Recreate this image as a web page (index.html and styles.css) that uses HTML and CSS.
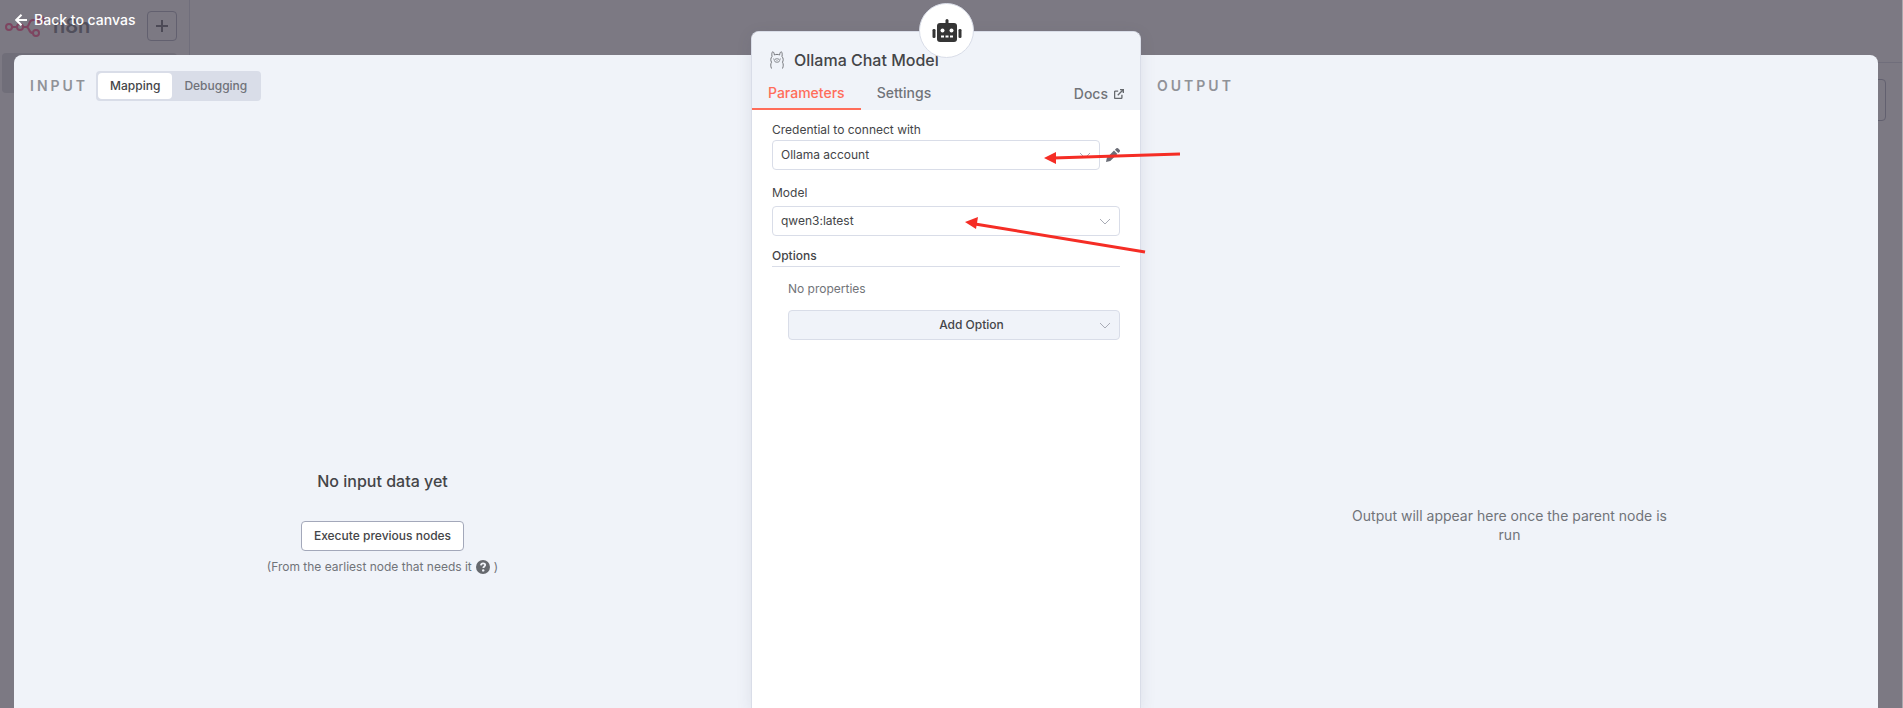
FILE: index.html
```html
<!DOCTYPE html>
<html lang="en">
  <head>
    <meta charset="UTF-8" />
    <meta name="viewport" content="width=device-width, initial-scale=1.0" />
    <title>Ollama Chat Model - n8n</title>
    <link rel="stylesheet" href="styles.css">
  </head>
  <body>
    <!-- dimmed editor behind the dialog -->
    <div class="app">
      <div class="sidebar">
        <div class="sidebar-header">
          <svg class="logo" width="40" height="24" viewBox="0 0 40 24" fill="none" stroke="#7d4560" stroke-width="2">
            <circle cx="4" cy="13" r="3" />
            <circle cx="15" cy="13" r="3" />
            <circle cx="36" cy="6" r="3" />
            <circle cx="31" cy="19" r="3" />
            <path d="M7 13h5M18 13h3c4 0 2-7 7-7h5M21 13c4 0 2 6 7 6" />
          </svg>
          <span class="brand">n8n</span>
          <button class="add-button" aria-label="Add">
            <svg width="12" height="12" viewBox="0 0 12 12" stroke="#4c4a56" stroke-width="2"><path d="M6 0v12M0 6h12" /></svg>
          </button>
        </div>
        <div class="menu-item"></div>
      </div>
      <div class="workspace">
        <div class="workspace-header"></div>
        <button class="canvas-button" aria-label="Open nodes"></button>
      </div>
    </div>

    <a class="back" href="#">
      <svg width="12" height="12" viewBox="0 0 12 12" fill="none" stroke="#fff" stroke-width="2"><path d="M12 6H1.500M6.500.7L1.200 6l5.300 5.300" /></svg>
      Back to canvas
    </a>

    <main class="modal">
      <section class="pane">
        <div class="pane-header">
          <h2 class="pane-title">Input</h2>
          <div class="switch">
            <button class="switch-item active">Mapping</button>
            <button class="switch-item">Debugging</button>
          </div>
        </div>
        <div class="no-input">
          <h3 class="empty-title">No input data yet</h3>
          <button class="execute">Execute previous nodes</button>
          <p class="hint">
            (From the earliest node that needs it
            <svg width="14" height="14" viewBox="0 0 14 14"><circle cx="7" cy="7" r="7" fill="#66696e" /><path d="M4.900 5.300c.2-1.300 1-1.900 2.200-1.900 1.200 0 2.100.7 2.100 1.700 0 1.400-1.900 1.400-1.900 2.900" fill="none" stroke="#f0f3f9" stroke-width="1.800" /><circle cx="7.200" cy="10.400" r="1.200" fill="#f0f3f9" /></svg>
            )
          </p>
        </div>
      </section>

      <section class="node">
        <div class="node-badge">
          <svg width="30" height="24" viewBox="0 0 30 24" fill="#353535">
            <rect x="13.500" y="0" width="3" height="6" rx="1.500" />
            <rect x="5" y="4" width="20" height="19" rx="3" />
            <rect x="0.500" y="10" width="3" height="9" rx="1.300" />
            <rect x="26.500" y="10" width="3" height="9" rx="1.300" />
            <g fill="#fff">
              <circle cx="10.500" cy="11.500" r="2" />
              <circle cx="19.500" cy="11.500" r="2" />
              <path d="M9 16.500h3v2H9zM13.500 16.500h3v2h-3zM18 16.500h3v2h-3z" />
            </g>
          </svg>
        </div>
        <div class="node-header">
          <h1 class="node-title">
            <svg width="16" height="18" viewBox="0 0 16 18" fill="none" stroke="#75777c" stroke-width="1">
              <path d="M3 5.500C2.600 3 2.800 1 3.700.8c1 0 1.500 1.500 1.700 3.200 1.600-.8 3.600-.8 5.200 0 .2-1.700.7-3.200 1.700-3.200.9.2 1.100 2.200.7 4.700 1.500 1.700 1.500 4 .5 5.700 1 1.900 1 3.900 0 6.300M3 5.500c-1.500 1.700-1.500 4-.5 5.700-1 1.900-1 3.900 0 6.300" />
              <ellipse cx="8" cy="9.500" rx="2.600" ry="1.800" stroke-width="0.800" />
              <path d="M8 9.300v.8M4.300 8h.8M10.900 8h.8" />
            </svg>
            Ollama Chat Model
          </h1>
          <nav class="tabs">
            <a class="tab active" href="#">Parameters</a>
            <a class="tab" href="#">Settings</a>
            <a class="tab docs" href="#">
              Docs
              <svg width="10" height="10" viewBox="0 0 12 12" fill="none" stroke="#66696e" stroke-width="1.600"><path d="M5 2.500H1.700a1 1 0 0 0-1 1v6.800a1 1 0 0 0 1 1h6.800a1 1 0 0 0 1-1V7M7.200.8h4v4M11 1L4.500 7.500" /></svg>
            </a>
          </nav>
        </div>

        <form class="parameters">
          <label class="label" for="credential">Credential to connect with</label>
          <div class="credential-row">
            <div class="select">
              <select id="credential"><option>Ollama account</option></select>
              <svg class="chevron" width="12" height="8" viewBox="0 0 12 8"><path d="M1 1l5 5 5-5" /></svg>
            </div>
            <button class="edit" type="button" aria-label="Edit credential">
              <svg width="14" height="14" viewBox="0 0 14 14" fill="#6b6d76"><path d="M0 14l.9-4.300L8 2.600 11.400 6l-7.100 7.100zM8.900 1.700L10.100.5c.7-.7 1.500-.7 2.200 0l1.200 1.200c.7.7.7 1.500 0 2.200L12.300 5.100z" /></svg>
            </button>
          </div>

          <label class="label model-label" for="model">Model</label>
          <div class="select">
            <select id="model"><option>qwen3:latest</option></select>
            <svg class="chevron" width="12" height="8" viewBox="0 0 12 8"><path d="M1 1l5 5 5-5" /></svg>
          </div>

          <h4 class="options-title">Options</h4>
          <div class="options">
            <p class="no-properties">No properties</p>
            <div class="select add-option">
              <select aria-label="Add Option"><option>Add Option</option></select>
              <svg class="chevron" width="12" height="8" viewBox="0 0 12 8"><path d="M1 1l5 5 5-5" /></svg>
            </div>
          </div>
        </form>

        <svg class="arrows" width="240" height="110" viewBox="0 0 240 110" stroke="#f52d25" stroke-width="3" fill="#f52d25">
          <path d="M215 9L88 13" />
          <path d="M79 13l12-6v12z" stroke="none" />
          <path d="M180 107L10 79" />
          <path d="M0 77l13-5-2 12z" stroke="none" />
        </svg>
      </section>

      <section class="pane">
        <div class="pane-header">
          <h2 class="pane-title">Output</h2>
        </div>
        <p class="no-output">Output will appear here once the parent node is run</p>
      </section>
    </main>
  </body>
</html>
```
FILE: styles.css
```css
* {
  box-sizing: border-box;
}

body {
  margin: 0;
  height: 100vh;
  overflow: hidden;
  position: relative;
  font-family: Inter, sans-serif;
  font-size: 12px;
  line-height: 16px;
  color: #444548;
  background: #7c7983;
}

h1, h2, h3, h4, p {
  margin: 0;
  font-weight: 400;
}

button, select {
  font: inherit;
  color: inherit;
}

a {
  color: inherit;
  text-decoration: none;
}

svg {
  display: block;
  flex: none;
}

/* dimmed editor */
.app {
  position: absolute;
  inset: 0;
  display: flex;
  border-right: 1px solid #aaa8ae;
}

.sidebar {
  width: 190px;
  border-right: 1px solid #706e7b;
}

.sidebar-header {
  display: flex;
  align-items: center;
  height: 52px;
  margin-bottom: 1px;
  padding: 0 12px 0 5px;
}

.brand {
  margin-left: 8px;
  font-size: 20px;
  font-weight: 600;
  color: #514f5b;
}

.add-button {
  display: flex;
  align-items: center;
  justify-content: center;
  width: 30px;
  height: 30px;
  margin-left: auto;
  padding: 0;
  border: 1px solid #62606f;
  border-radius: 4px;
  background: none;
}

.menu-item {
  height: 40px;
  margin: 0 12px 0 2px;
  border-radius: 4px;
  background: #706e79;
}

.workspace {
  flex: 1;
}

.workspace-header {
  height: 63px;
  border-bottom: 1px solid #706e7b;
}

.canvas-button {
  display: block;
  width: 42px;
  height: 42px;
  margin: 16px 16px 0 auto;
  border: 1px solid #62606f;
  border-radius: 4px;
  background: none;
}

.back {
  position: absolute;
  top: 10px;
  left: 15px;
  display: flex;
  align-items: center;
  gap: 7px;
  height: 20px;
  font-size: 14px;
  font-weight: 500;
  color: #fff;
}

/* dialog */
.modal {
  position: relative;
  display: grid;
  grid-template-columns: 1fr 390px 1fr;
  height: calc(100vh - 55px);
  margin: 55px 25px 0 14px;
  border-radius: 8px 8px 0 0;
  background: #f0f3f9;
}

.pane-header {
  display: flex;
  align-items: center;
  gap: 8px;
  height: 46px;
  padding: 16px 16px 0;
}

.pane-title {
  font-size: 14px;
  font-weight: 600;
  letter-spacing: 3px;
  text-transform: uppercase;
  color: #909298;
}

.switch {
  display: flex;
  padding: 2px;
  border-radius: 4px;
  background: #d9dde8;
}

.switch-item {
  height: 26px;
  padding: 0 12px;
  border: none;
  border-radius: 4px;
  background: none;
  font-weight: 500;
  color: #707279;
}

.switch-item.active {
  background: #fff;
  color: #444548;
}

.no-input {
  display: flex;
  flex-direction: column;
  align-items: center;
  padding-top: 52vh;
}

.empty-title {
  font-size: 16px;
  font-weight: 500;
  line-height: 24px;
}

.execute {
  height: 30px;
  margin: 28px 0 8px;
  padding: 0 12px;
  border: 1px solid #a3a8ba;
  border-radius: 4px;
  background: #fff;
  font-weight: 500;
}

.hint {
  display: flex;
  align-items: center;
  gap: 4px;
  color: #717479;
}

.no-output {
  max-width: 320px;
  margin: 1px auto 0;
  padding-top: 57vh;
  font-size: 14px;
  line-height: 19px;
  text-align: center;
  color: #717479;
}

/* node settings panel */
.node {
  position: relative;
  margin-top: -24px;
  border: 1px solid #d9dde8;
  border-bottom: none;
  border-radius: 8px 8px 0 0;
  background: #fff;
  box-shadow: 0 4px 16px rgba(50, 61, 85, 0.1);
}

.node-badge {
  position: absolute;
  top: -29px;
  left: 50%;
  display: flex;
  align-items: center;
  justify-content: center;
  width: 55px;
  height: 55px;
  margin-left: -27px;
  border: 1px solid #d9dde8;
  border-radius: 50%;
  background: #fff;
}

.node-header {
  padding-top: 17px;
  border-radius: 8px 8px 0 0;
  background: #f0f3f9;
}

.node-title {
  display: flex;
  align-items: center;
  gap: 9px;
  padding-left: 17px;
  font-size: 16px;
  font-weight: 500;
  line-height: 22px;
}

.tabs {
  display: flex;
  margin-top: 8px;
  font-size: 14px;
  font-weight: 500;
  line-height: 28px;
  color: #717479;
}

.tab {
  height: 31px;
  padding: 0 16px;
  border-bottom: 2px solid transparent;
}

.tab.active {
  color: #ff6d5a;
  border-color: #ff6d5a;
}

.docs {
  display: flex;
  align-items: center;
  gap: 6px;
  margin-left: auto;
}

.parameters {
  padding: 12px 20px;
}

.label {
  display: block;
  margin-bottom: 2px;
}

.model-label {
  margin: 15px 0 5px;
}

.credential-row {
  display: flex;
  align-items: center;
  gap: 6px;
}

.select {
  position: relative;
  flex: 1;
}

.select select {
  display: block;
  width: 100%;
  height: 30px;
  padding: 0 30px 0 8px;
  border: 1px solid #d9dde8;
  border-radius: 4px;
  background: #fff;
  appearance: none;
}

.chevron {
  position: absolute;
  top: 12px;
  right: 9px;
  fill: none;
  stroke: #a9acb6;
  pointer-events: none;
}

.edit {
  padding: 0;
  border: none;
  background: none;
}

.options-title {
  margin-top: 12px;
  padding-bottom: 2px;
  border-bottom: 1px solid #d9dde8;
  font-weight: 500;
}

.options {
  padding: 14px 0 0 16px;
}

.no-properties {
  margin-bottom: 13px;
  color: #717479;
}

.add-option select {
  padding: 0 0 0 35px;
  background: #f0f3f9;
  font-weight: 500;
  text-align-last: center;
}

.arrows {
  position: absolute;
  top: 113px;
  left: 213px;
  z-index: 1;
  pointer-events: none;
}
```
